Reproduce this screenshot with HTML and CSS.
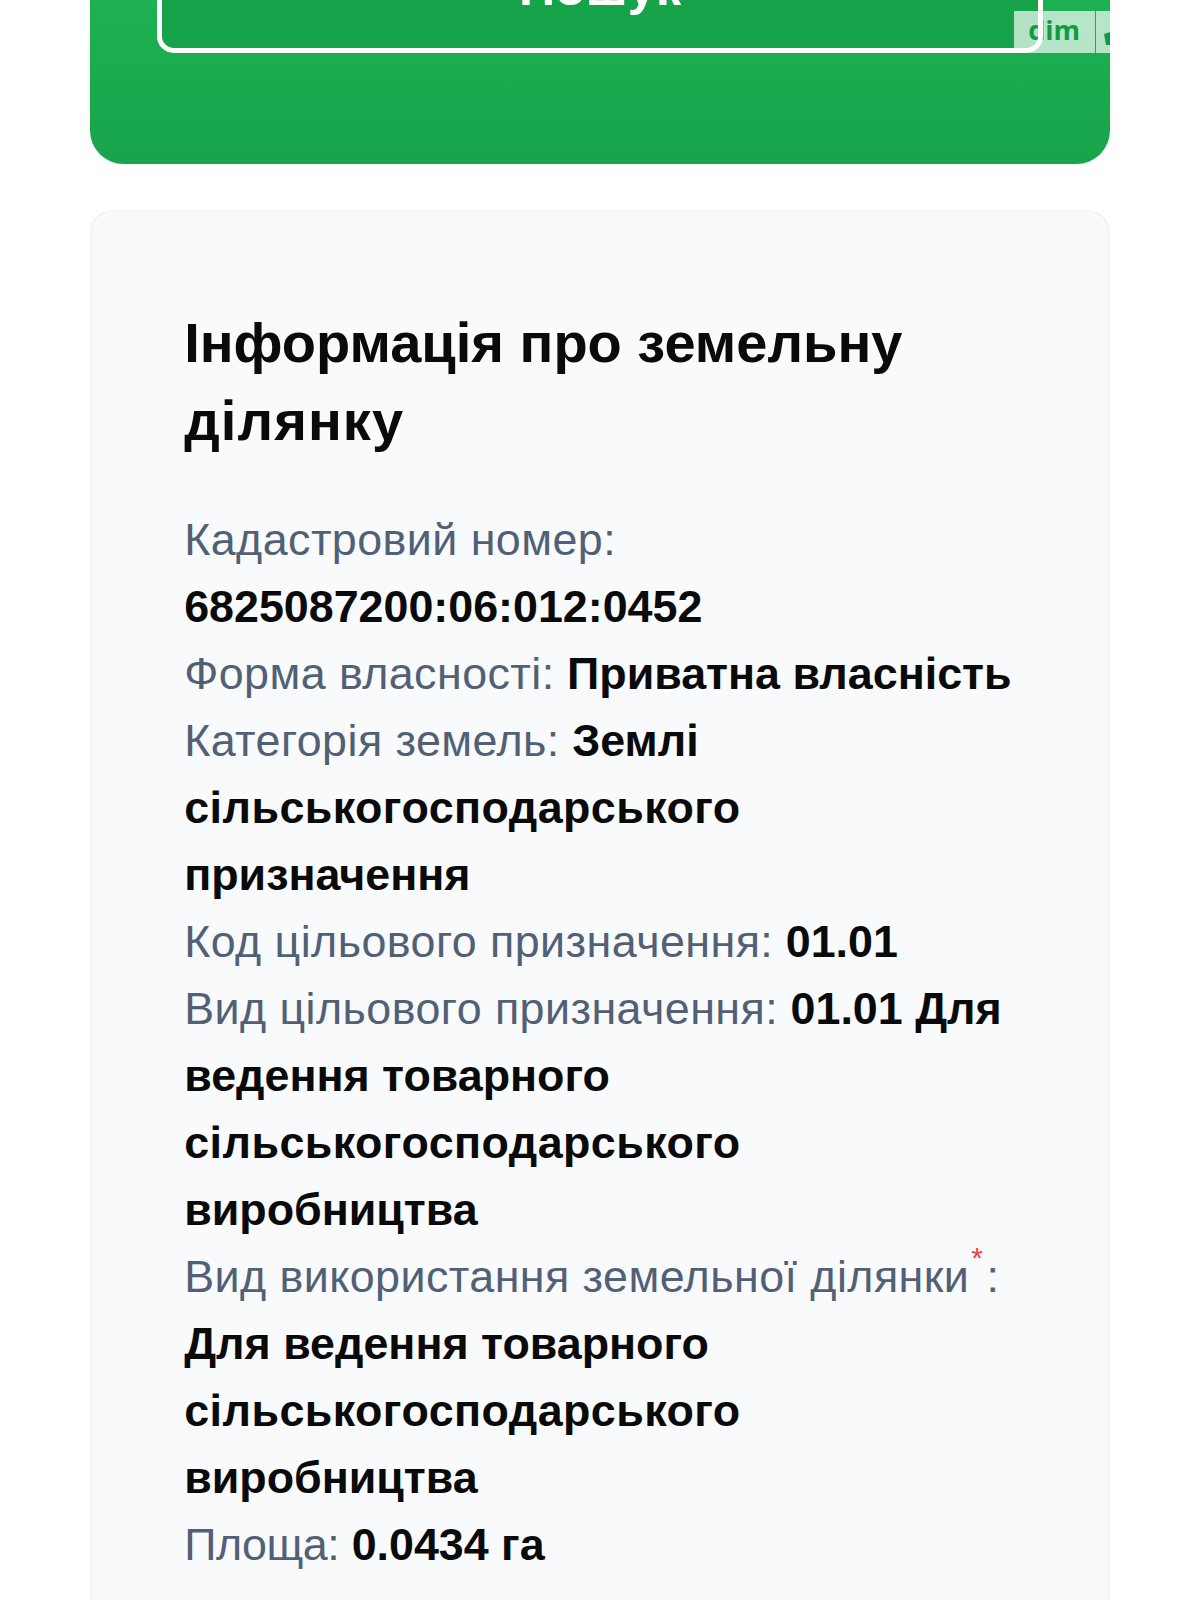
FILE: index.html
```html
<!DOCTYPE html>
<html lang="uk">
<head>
    <meta charset="UTF-8">
    <meta name="viewport" content="width=device-width, initial-scale=1.0">
    <title>Інформація про земельну ділянку</title>
    <link rel="stylesheet" href="styles.css">
</head>
<body>
    <div class="page">
        <div class="search-box">
            <button class="search-btn">Пошук</button>
            <div class="ad-badge">
                <span class="ad-text">dim</span>
                <span class="ad-icon">
                    <svg width="14" height="42" viewBox="0 0 14 42"><path d="M8 23l6-2v13h-4z" fill="#0f9a45"/></svg>
                </span>
            </div>
        </div>
        <div class="info-card">
            <h2 class="info-title">Інформація про земельну <span class="title-wide">ділянку</span></h2>
            <div class="info-list">
                <div class="info-row"><span class="info-label">Кадастровий номер:</span> <b>6825087200:06:012:0452</b></div>
                <div class="info-row"><span class="info-label">Форма власності:</span> <b>Приватна власність</b></div>
                <div class="info-row"><span class="info-label">Категорія земель:</span> <b>Землі <span class="word-wide">сільськогосподарського</span> призначення</b></div>
                <div class="info-row"><span class="info-label">Код цільового призначення:</span> <b>01.01</b></div>
                <div class="info-row"><span class="info-label">Вид цільового призначення:</span> <b>01.01 Для ведення товарного <span class="word-wide">сільськогосподарського</span> виробництва</b></div>
                <div class="info-row"><span class="info-label">Вид використання земельної ділянки<sup class="star">*</sup>:</span> <b>Для ведення товарного <span class="word-wide">сільськогосподарського</span> виробництва</b></div>
                <div class="info-row"><span class="info-label info-label-short">Площа:</span> <b>0.0434 га</b></div>
            </div>
        </div>
    </div>
</body>
</html>
```

FILE: styles.css
```css
body {
    margin: 0;
    background: #fff;
    font-family: "Liberation Sans", Arial, sans-serif;
    height: 1600px;
    overflow: hidden;
}
.page {
    height: 1600px;
    overflow: hidden;
    padding: 0 89.6px;
}
.search-box {
    position: relative;
    margin-top: -145px;
    height: 309px;
    box-sizing: border-box;
    padding: 67.2px;
    border-radius: 33.6px;
    background: linear-gradient(180deg, #20bd58, #18a44b);
}
.search-btn {
    position: relative;
    display: block;
    width: 100%;
    height: 130.5px;
    border: 0;
    border-radius: 16.8px;
    background: #16a34a;
    color: #fff;
    font-family: inherit;
    font-size: 50.4px;
    font-weight: 700;
}
.search-btn::after {
    content: "";
    position: absolute;
    inset: 0;
    z-index: 2;
    border: 5.6px solid #fff;
    border-radius: 16.8px;
}
.ad-badge {
    position: absolute;
    z-index: 1;
    left: 924px;
    right: 0;
    top: 156px;
    height: 42px;
    display: flex;
    overflow: hidden;
    font-family: "Open Sans", sans-serif;
    color: #0f9a45;
}
.ad-text {
    width: 81px;
    background: rgba(255,255,255,0.68);
    text-align: center;
    font-size: 27px;
    line-height: 37px;
    font-weight: 700;
}
.ad-icon {
    margin-left: 1px;
    flex: 1;
    display: flex;
    background: rgba(255,255,255,0.68);
}
.info-card {
    margin-top: 46px;
    padding: 92px 89.6px 89.6px 92.6px;
    min-height: 1400px;
    border: 2.8px solid #f3f4f6;
    border-radius: 22.4px;
    background: #f8fafc;
}
.info-title {
    margin: 0 0 44.8px;
    font-size: 56px;
    line-height: 78.4px;
    font-weight: 700;
    color: #0a0a0a;
}
.title-wide {
    letter-spacing: 1.1px;
}
.info-row {
    font-size: 44.8px;
    line-height: 67px;
    color: #526075;
}
.info-row b {
    color: #0a0a0a;
    font-weight: 700;
}
.info-label {
    letter-spacing: 0.45px;
}
.info-label-short {
    letter-spacing: -0.5px;
}
.word-wide {
    letter-spacing: 0.46px;
}
.star {
    color: #ef4444;
    font-size: 30px;
    line-height: 0;
    vertical-align: 24px;
    margin: 0 3px 0 2px;
}
```
